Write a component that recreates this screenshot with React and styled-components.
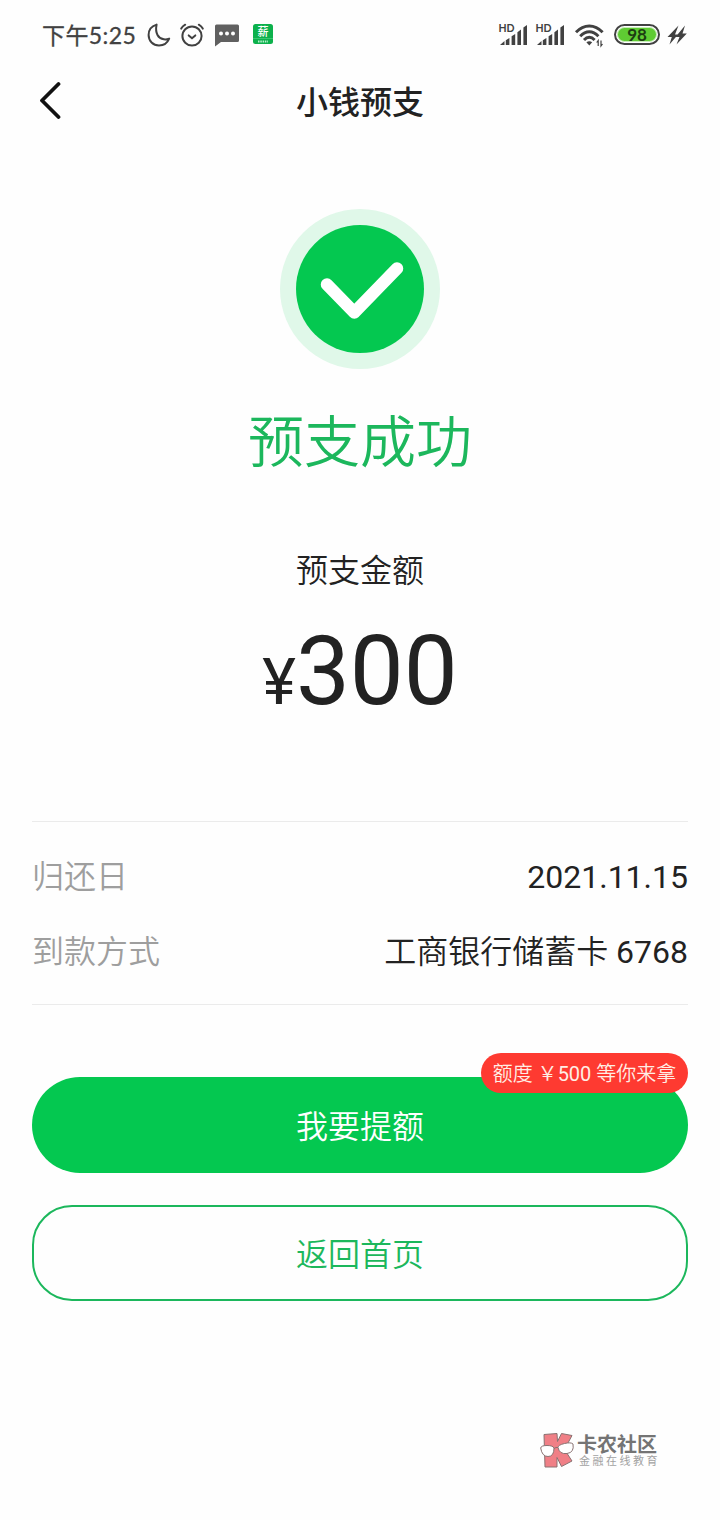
import React from "react";
import styled, { createGlobalStyle, ThemeProvider } from "styled-components";

const theme = {
  colorPrimary: "#04c850",
  colorPrimaryLine: "#1cb75c",
  colorPrimaryPale: "#e0f8e9",
  colorText: "#222222",
  colorMuted: "#9e9e9e",
  colorStatus: "#414141",
  colorDivider: "#ebebeb",
  colorDanger: "#fe3a31",
  fontMain: `Roboto, "Noto Sans CJK SC", sans-serif`,
};

const GlobalStyle = createGlobalStyle`
  * {
    box-sizing: border-box;
  }
  body {
    margin: 0;
    background-color: #fefefe;
  }
`;

const Page = styled.div`
  display: flex;
  flex-direction: column;
  width: 720px;
  height: 1520px;
  overflow: hidden;
  color: ${({ theme }) => theme.colorText};
  font-family: ${({ theme }) => theme.fontMain};
`;

const StatusBar = styled.div`
  display: flex;
  justify-content: space-between;
  align-items: center;
  height: 70px;
  padding: 0 33px 0 42px;
  color: ${({ theme }) => theme.colorStatus};
`;
const StatusGroup = styled.div`
  display: flex;
  align-items: center;
  gap: ${({ $gap }) => $gap};
`;
const Clock = styled.span`
  width: 95px;
  font-family: Lato, "Noto Sans CJK SC", sans-serif;
  font-size: 23px;
  font-weight: 400;
  letter-spacing: 0.4px;
  line-height: 24px;
  white-space: nowrap;
  -webkit-text-stroke: 0.3px currentColor;
`;
const StatusIcon = styled.svg`
  display: block;
  flex: none;
  overflow: visible;
`;
const AppNotice = styled.span`
  margin-left: 4px;
`;
const Battery = styled.div`
  display: flex;
  width: 46px;
  height: 21px;
  margin: 0 -1px 1px 4px;
  padding: 1px;
  border: 2px solid ${({ theme }) => theme.colorStatus};
  border-radius: 11px;
`;
const BatteryLevel = styled.span`
  flex: 1;
  border: 1px solid #c9efb9;
  border-radius: 8px;
  background-color: #5fcb33;
  color: #1d3d12;
  font-family: Lato, sans-serif;
  font-size: 17px;
  font-weight: 700;
  line-height: 13px;
  text-align: center;
`;

const NavBar = styled.header`
  display: grid;
  grid-template-columns: 60px 1fr 60px;
  align-items: center;
  height: 62px;
  padding: 0 20px;
`;
const BackButton = styled.button`
  display: flex;
  justify-content: center;
  padding: 0 0 3px;
  border: 0;
  background: none;
  color: #111111;
`;
const NavTitle = styled.h1`
  margin: 0;
  padding-top: 3px;
  font-size: 32px;
  font-weight: 500;
  line-height: 40px;
  text-align: center;
`;

const Result = styled.section`
  display: flex;
  flex-direction: column;
  align-items: center;
  height: 689px;
  padding-top: 77px;
`;
const ResultTitle = styled.h2`
  margin: 38px 0 0;
  color: ${({ theme }) => theme.colorPrimaryLine};
  font-size: 56px;
  font-weight: 350;
  line-height: 72px;
`;
const ResultLabel = styled.p`
  margin: 72px 0 0;
  font-size: 32px;
  font-weight: 350;
  line-height: 40px;
`;
const Amount = styled.p`
  margin: 24px 0 0;
  font-size: 96px;
  line-height: 112px;
`;
const Currency = styled.span`
  font-size: 64px;
`;

const Details = styled.dl`
  display: flex;
  flex-direction: column;
  gap: 35px;
  height: 184px;
  margin: 0 32px;
  padding-top: 35px;
  border-top: 1px solid ${({ theme }) => theme.colorDivider};
  border-bottom: 1px solid ${({ theme }) => theme.colorDivider};
`;
const DetailRow = styled.div`
  display: flex;
  justify-content: space-between;
  font-size: 32px;
  font-weight: 350;
  line-height: 40px;
`;
const DetailName = styled.dt`
  color: ${({ theme }) => theme.colorMuted};
`;
const DetailValue = styled.dd`
  margin: 0;
`;
const Digits = styled.span`
  font-weight: 400;
`;

const Actions = styled.div`
  display: flex;
  flex-direction: column;
  gap: 32px;
  padding: 72px 32px 0;
`;
const ActionSlot = styled.div`
  position: relative;
  display: flex;
`;
const ActionButton = styled.button`
  flex: 1;
  height: 96px;
  padding: 0 0 2px;
  border: ${({ $outline, theme }) =>
    $outline ? `2px solid ${theme.colorPrimaryLine}` : "0"};
  border-radius: ${({ $outline }) => ($outline ? "40px" : "48px")};
  background-color: ${({ $outline, theme }) =>
    $outline ? "transparent" : theme.colorPrimary};
  color: ${({ $outline, theme }) =>
    $outline ? theme.colorPrimaryLine : "#ffffff"};
  font-family: inherit;
  font-size: 32px;
  font-weight: 350;
`;
const Promo = styled.span`
  position: absolute;
  top: -24px;
  right: 0;
  width: 207px;
  height: 40px;
  border-radius: 20px;
  background-color: ${({ theme }) => theme.colorDanger};
  color: #ffeee5;
  font-size: 20px;
  font-weight: 350;
  line-height: 42px;
  text-align: center;
  white-space: nowrap;
`;

const Community = styled.footer`
  display: flex;
  align-items: center;
  gap: 3px;
  margin: auto 60px 52px auto;
  font-family: "Noto Sans CJK SC", sans-serif;
`;
const CommunityText = styled.div`
  display: flex;
  flex-direction: column;
`;
const CommunityName = styled.span`
  color: #747474;
  font-size: 20px;
  font-weight: 700;
  line-height: 21px;
`;
const CommunityTagline = styled.span`
  padding-left: 2px;
  color: #a2a2a2;
  font-size: 11px;
  letter-spacing: 2.5px;
  line-height: 13px;
`;

const MoonIcon = () => (
  <StatusIcon width="24" height="24" viewBox="0 0 24 24" fill="none">
    <path
      d="M9.600 1.600C4.800 3 1.600 7 1.600 12c0 6 4.500 10.400 10.400 10.400 4.600 0 8.500-2.700 10.200-6.800-2 .8-3.700 1-5.400.7C11.400 15.500 7.800 10.300 9.600 1.600Z"
      stroke="currentColor"
      strokeWidth="2"
      strokeLinejoin="round"
    />
  </StatusIcon>
);

const AlarmIcon = () => (
  <StatusIcon width="24" height="24" viewBox="1 0 24 24" fill="none">
    <g stroke="currentColor" strokeWidth="2" strokeLinecap="round">
      <circle cx="12" cy="13" r="9.600" />
      <path d="M8.700 12.400l3.300 2.800 3.300-2.800M1.200 5.600Q2.600 3.200 5.200 1.700M22.800 5.600Q21.400 3.200 18.800 1.700" />
    </g>
  </StatusIcon>
);

const MessageIcon = () => (
  <StatusIcon width="24" height="23" viewBox="0 0 24 23">
    <path
      d="M1.500.5h21q1.500 0 1.500 1.500v14.500q0 1.500-1.500 1.500H6L0 22.500V2Q0 .5 1.500.5Z"
      fill="#606060"
    />
    <g fill="#ffffff">
      <circle cx="6" cy="9.500" r="2" />
      <circle cx="12" cy="9.500" r="2" />
      <circle cx="18" cy="9.500" r="2" />
    </g>
  </StatusIcon>
);

const SalaryIcon = () => (
  <StatusIcon width="20" height="22" viewBox="0 0 20 22">
    <rect width="20" height="20" rx="2.500" fill="#0cb14c" />
    <text
      x="10"
      y="12"
      fill="#ffffff"
      fontFamily="Noto Sans CJK SC, sans-serif"
      fontSize="11"
      fontWeight="500"
      textAnchor="middle"
    >
      薪
    </text>
    <path d="M0 14.500h20" stroke="#5bd389" strokeWidth=".6" />
    <path
      d="M5 17.500h10"
      stroke="#b9f0cd"
      strokeWidth="2"
      strokeDasharray="1.500 .8"
    />
  </StatusIcon>
);

const SignalIcon = () => (
  <StatusIcon width="29" height="22" viewBox="0 0 29 22" fill="currentColor">
    <text
      x="-.5"
      y="7.500"
      fontFamily="Lato, sans-serif"
      fontSize="10.500"
      fontWeight="700"
    >
      HD
    </text>
    <path d="M1 21L5.500 17V21ZM6.800 16.200l3.600-2.200v7H6.800ZM12.600 12.300l3.600-2.300v11H12.600ZM18.400 8.200l3.600-2.700v15.500H18.400ZM24.400 3.500l3.600-2.500v20H24.400Z" />
  </StatusIcon>
);

const WifiIcon = () => (
  <StatusIcon width="29" height="22" viewBox="-2 0 29 22" fill="none">
    <g stroke="currentColor" strokeWidth="2.900">
      <path d="M1 8.300Q7 2 14.300 2T27.600 8.300" />
      <path d="M5.200 12.300Q9.500 7.800 14.300 7.800T23.400 12.300" />
      <path d="M9 16Q11.500 13.300 14.300 13.300T19.600 16" />
    </g>
    <path
      d="M11.400 18.300q2.900-2.300 5.800 0L14.300 21.500Z"
      fill="currentColor"
    />
    <path
      d="M23.200 22v-5.500l-1.500 2M26 16.500V22l1.500-2"
      stroke="currentColor"
      strokeWidth="1.200"
    />
  </StatusIcon>
);

const ChargeIcon = () => (
  <StatusIcon width="20" height="20" viewBox="0 0 20 20" fill="currentColor">
    <path d="M11.500.5L.5 12h4.300L2.500 19.500 11 9.500H8Z" />
    <path d="M18 .5L8.500 12h4L9.500 19.500 19.800 8.500H15.500Z" />
  </StatusIcon>
);

const BackIcon = () => (
  <svg width="24" height="38" viewBox="0 0 24 38" fill="none">
    <path
      d="M20.500 3L4 19.500 20.500 36"
      stroke="currentColor"
      strokeWidth="3.800"
      strokeLinecap="round"
      strokeLinejoin="round"
    />
  </svg>
);

const SuccessIcon = () => (
  <svg width="160" height="160" viewBox="0 0 160 160" fill="none">
    <circle cx="80" cy="80" r="80" fill={theme.colorPrimaryPale} />
    <circle cx="80" cy="80" r="64" fill={theme.colorPrimary} />
    <path
      d="M47 75.500L74.300 103.500 117 59.500"
      stroke="#ffffff"
      strokeWidth="12.500"
      strokeLinecap="round"
      strokeLinejoin="round"
    />
  </svg>
);

const CommunityLogo = () => (
  <svg width="34" height="36" viewBox="0 0 34 36">
    <g stroke="#8a7272" strokeWidth="1">
      <path
        d="M4 2.500L17 1.500l.5 8L21.500 1.500 32 3.500 24.500 17.500l7.500 11.500-10.500 5.500-4.500-9v9.500L5 35Z"
        fill="#f07f86"
      />
      <path
        d="M.7 16Q1 13.500 7 13.500t7 2.500q0 8.500-6 8.500T.7 16ZM18 15.500q0-2.500 6.500-4t8.500.5q1.500 8.500-6 9.500T18 15.500Z"
        fill="#ffffff"
      />
      <path d="M14 16.500q2-1.500 4-1" fill="none" />
    </g>
  </svg>
);

const App = () => {
  return (
    <ThemeProvider theme={theme}>
      <GlobalStyle />
      <Page>
        <StatusBar>
          <StatusGroup $gap="10px">
            <Clock>下午5:25</Clock>
            <MoonIcon />
            <AlarmIcon />
            <MessageIcon />
            <AppNotice>
              <SalaryIcon />
            </AppNotice>
          </StatusGroup>
          <StatusGroup $gap="8px">
            <SignalIcon />
            <SignalIcon />
            <WifiIcon />
            <Battery>
              <BatteryLevel>98</BatteryLevel>
            </Battery>
            <ChargeIcon />
          </StatusGroup>
        </StatusBar>
        <NavBar>
          <BackButton aria-label="返回">
            <BackIcon />
          </BackButton>
          <NavTitle>小钱预支</NavTitle>
        </NavBar>
        <Result>
          <SuccessIcon />
          <ResultTitle>预支成功</ResultTitle>
          <ResultLabel>预支金额</ResultLabel>
          <Amount>
            <Currency>¥</Currency>300
          </Amount>
        </Result>
        <Details>
          <DetailRow>
            <DetailName>归还日</DetailName>
            <DetailValue>
              <Digits>2021.11.15</Digits>
            </DetailValue>
          </DetailRow>
          <DetailRow>
            <DetailName>到款方式</DetailName>
            <DetailValue>
              工商银行储蓄卡 <Digits>6768</Digits>
            </DetailValue>
          </DetailRow>
        </Details>
        <Actions>
          <ActionSlot>
            <ActionButton>我要提额</ActionButton>
            <Promo>
              额度 ￥<Digits>500</Digits> 等你来拿
            </Promo>
          </ActionSlot>
          <ActionSlot>
            <ActionButton $outline>返回首页</ActionButton>
          </ActionSlot>
        </Actions>
        <Community>
          <CommunityLogo />
          <CommunityText>
            <CommunityName>卡农社区</CommunityName>
            <CommunityTagline>金融在线教育</CommunityTagline>
          </CommunityText>
        </Community>
      </Page>
    </ThemeProvider>
  );
};

export default App;
